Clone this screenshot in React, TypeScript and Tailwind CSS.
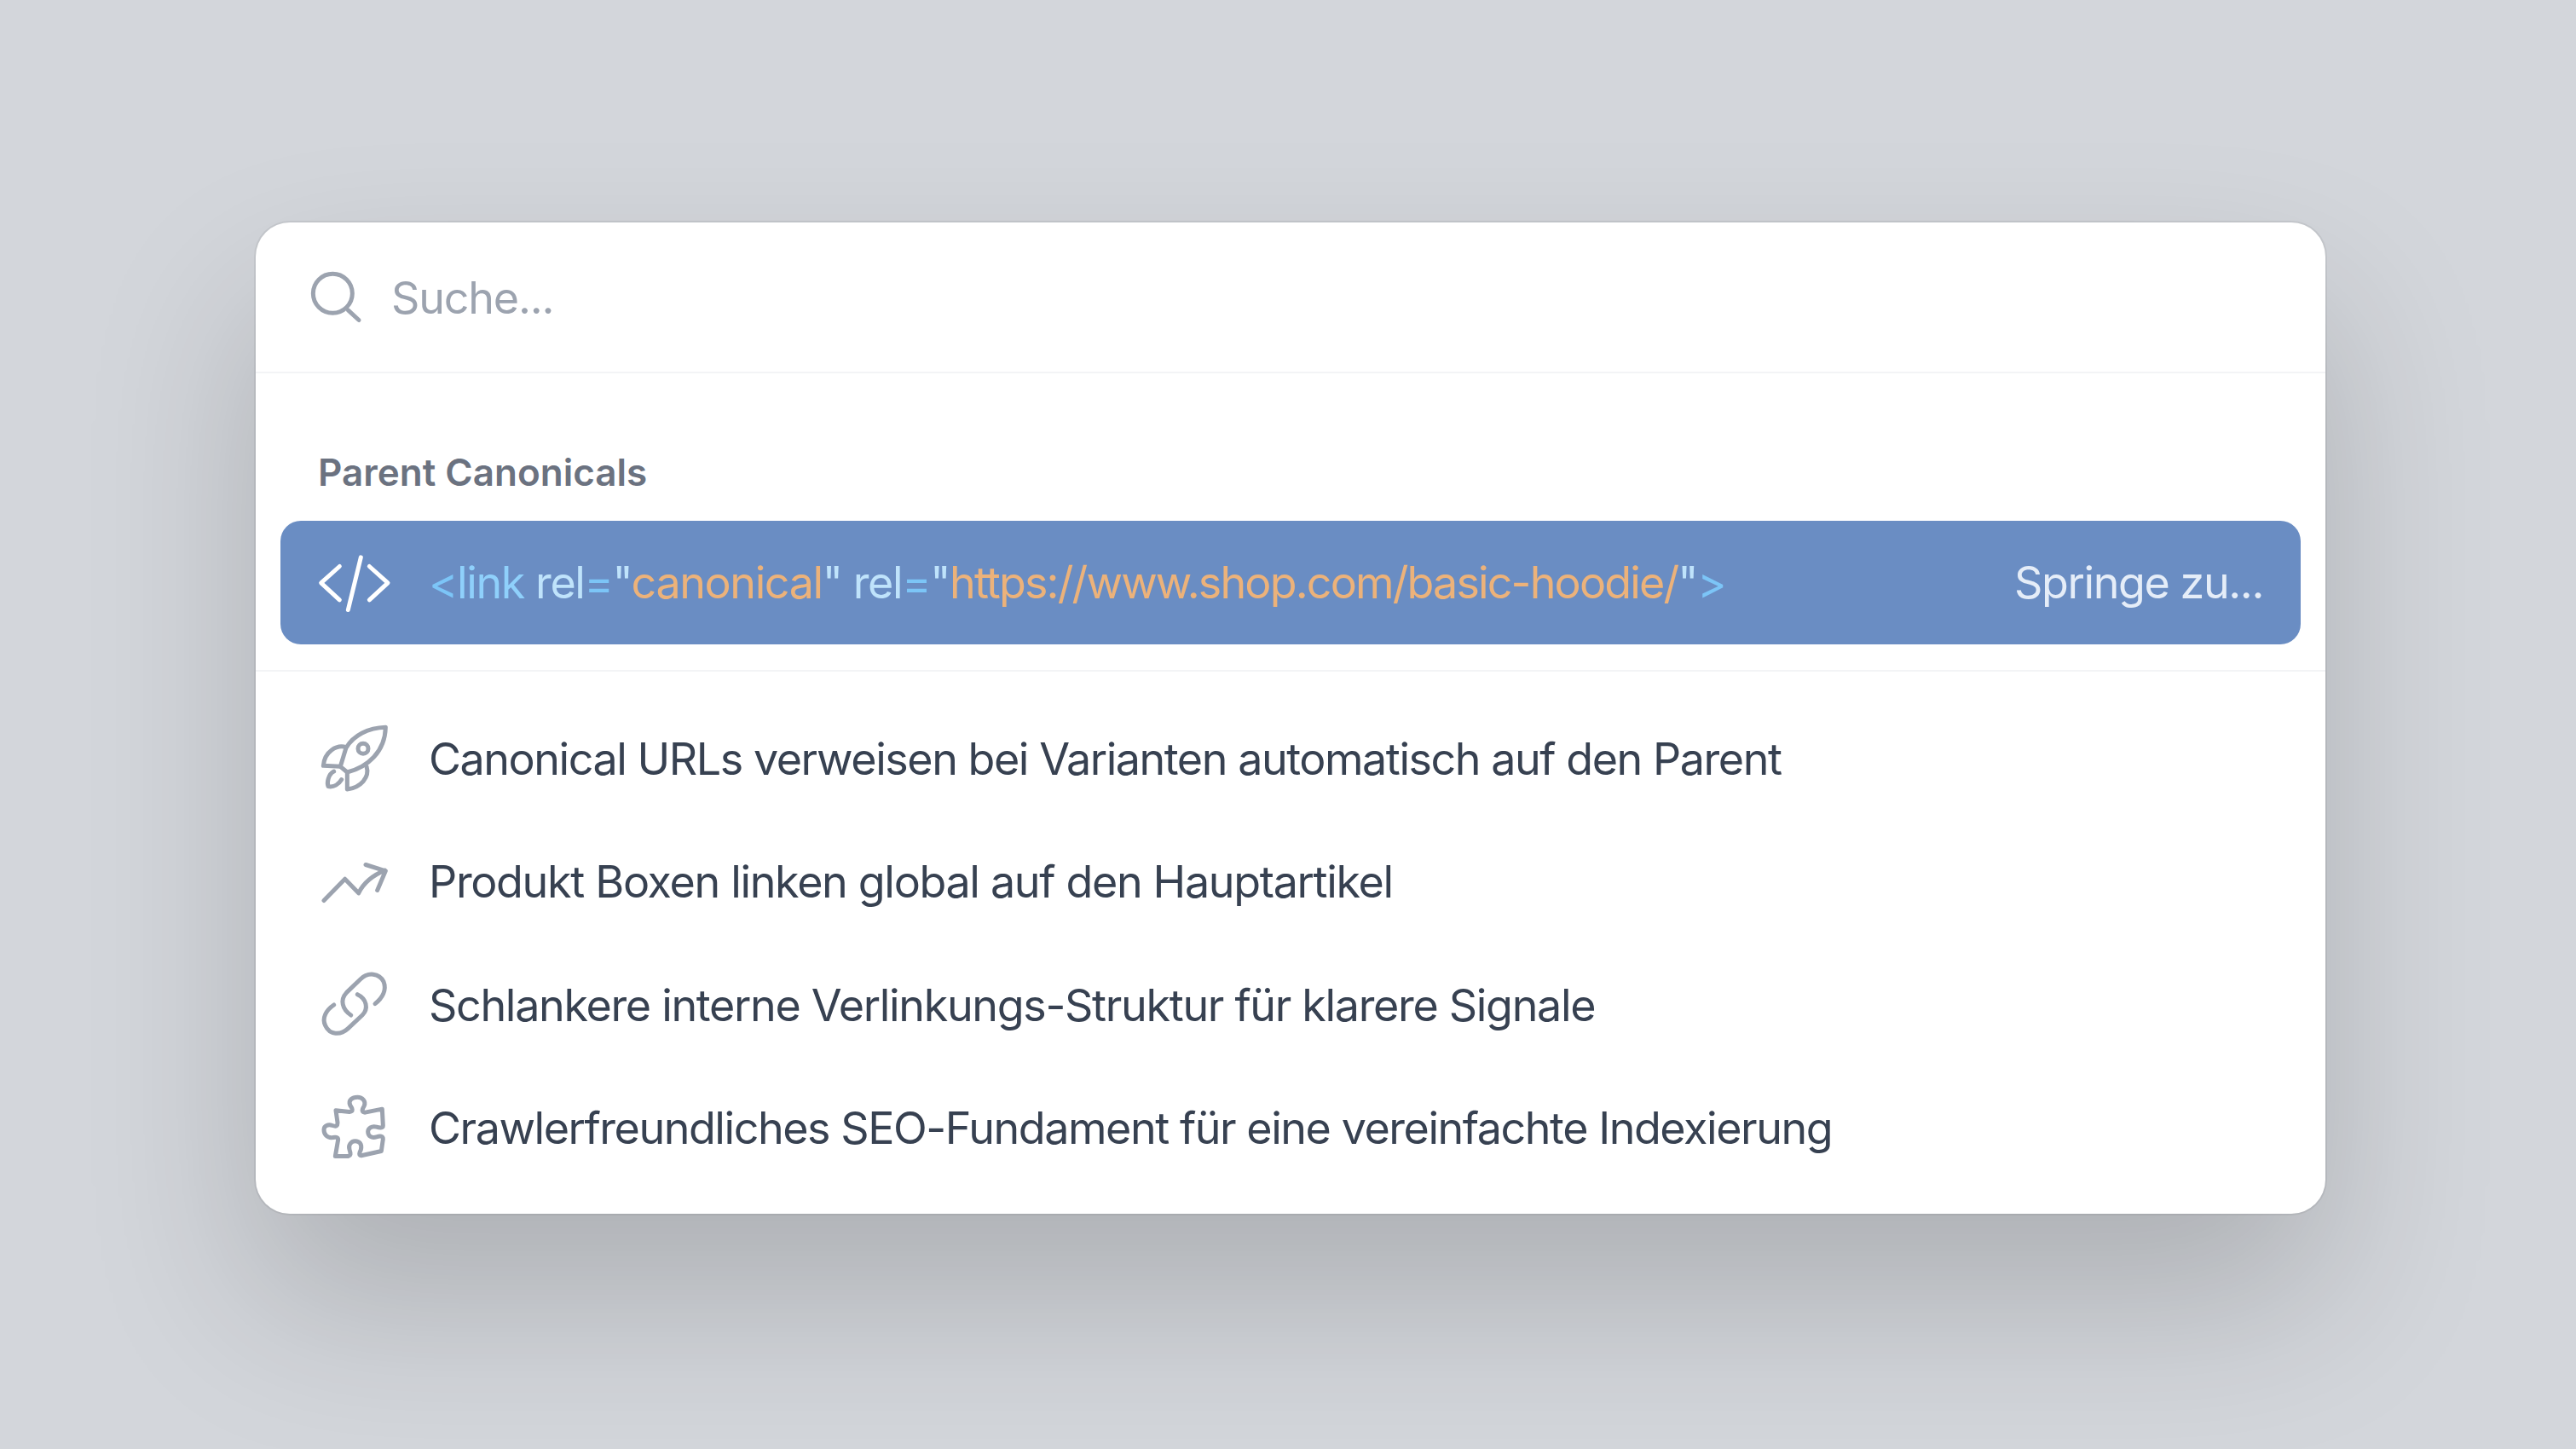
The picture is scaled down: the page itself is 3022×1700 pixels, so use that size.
import type { ReactNode } from "react";

function Icon({ y, children, className }: { y: number; children: ReactNode; className: string }) {
  return (
    <svg
      viewBox={`0 ${y} 330 330`}
      fill="none"
      stroke="currentColor"
      strokeWidth={15}
      strokeLinecap="round"
      strokeLinejoin="round"
      className={`-my-[10px] size-[110px] shrink-0 ${className}`}
    >
      {children}
    </svg>
  );
}

const rows: { y: number; icon: ReactNode; text: string; tracking: string }[] = [
  {
    y: -18,
    tracking: "tracking-[-1.45px]",
    text: "Canonical URLs verweisen bei Varianten automatisch auf den Parent",
    icon: (
      <>
        <path d="M277 40C215 42 165 68 138 112L118 178L142 198C215 180 275 125 277 40Z" />
        <circle cx="198" cy="115" r="18" />
        <path d="M138 110C105 100 62 125 58 175L118 178" />
        <path d="M210 178C222 215 190 252 142 258L142 198" />
        <path d="M95 195C75 205 70 235 75 248C95 252 112 240 122 224" />
      </>
    ),
  },
  {
    y: -4.5,
    tracking: "tracking-[-1.33px]",
    text: "Produkt Boxen linken global auf den Hauptartikel",
    icon: <path d="M60 228L134 152L182 202C200 165 230 140 275 122M207 102L277 124L248 192" />,
  },
  {
    y: -6,
    tracking: "tracking-[-1.32px]",
    text: "Schlankere interne Verlinkungs-Struktur für klarere Signale",
    icon: (
      <>
        <path d="M155 198C125 178 115 145 140 118L188 72C215 45 255 50 270 80C282 110 265 138 240 158" />
        <path d="M178 125C210 140 218 175 195 198L145 245C118 270 80 268 65 235C52 208 68 180 95 162" />
      </>
    ),
  },
  {
    y: -7.5,
    tracking: "tracking-[-1.45px]",
    text: "Crawlerfreundliches SEO-Fundament für eine vereinfachte Indexierung",
    icon: (
      <path d="M102 97L150 102C165 100 160 90 152 78C145 60 160 50 178 50C196 50 208 65 202 80C195 92 190 102 205 104L265 92L268 150C268 160 255 158 245 155C228 150 215 160 215 172C215 188 228 195 245 190C258 186 268 186 268 198L262 240L195 255C180 258 185 245 190 235C195 215 185 205 170 205C155 205 145 220 150 235C155 250 155 255 145 258L100 258L110 200C110 190 100 190 92 192C70 195 60 180 60 165C60 150 75 145 90 150C105 155 108 150 108 140Z" />
    ),
  },
];

export default function App() {
  return (
    <div className="h-[1700px] bg-[#d3d6db] pt-[261px] font-['Inter',sans-serif]">
      <div className="ml-[300px] flex h-[1163px] w-[2428px] flex-col rounded-[40px] bg-white shadow-[0_100px_200px_rgba(0,0,0,0.18),0_0_0_2px_rgba(0,0,0,0.06)]">
        <div className="flex h-[177px] items-center gap-[4px] border-b-2 border-[#f3f4f6] pl-[45px]">
          <Icon y={-4.5} className="text-[#9ca3af]">
            <circle cx="136" cy="146" r="69" />
            <path d="M190 205L228 240" />
          </Icon>
          <span className="pt-[2px] text-[52px] tracking-[-1.2px] text-[#9ca3af]">Suche...</span>
        </div>
        <div className="border-b-2 border-[#f3f4f6] px-[29px] pb-[30px]">
          <div className="px-[44px] pt-[86px] pb-[27px] text-[44px] leading-[60px] font-semibold text-[#6b7280]">
            Parent Canonicals
          </div>
          <div className="flex h-[145px] items-center gap-[33px] rounded-[24px] bg-[#6a8dc3] pr-[44px] pl-[31px]">
            <Icon y={-4.5} className="text-white">
              <path d="M115 102L50 160L115 220M220 102L285 160L220 220M190 70L145 255" />
            </Icon>
            <span className="flex-1 text-[52px] tracking-[-1.4px] text-[#bfe3fb]">
              <span className="text-[#7cc5f7]">&lt;</span>
              <span className="text-[#8fd0fb]">link</span> rel<span className="text-[#7cc5f7]">=</span>"
              <span className="text-[#ecb27a]">canonical</span>" rel<span className="text-[#7cc5f7]">=</span>"
              <span className="tracking-[-1.85px] text-[#ecb27a]">https://www.shop.com/basic-hoodie/</span>"
              <span className="text-[#7cc5f7]">&gt;</span>
            </span>
            <span className="text-[52px] tracking-[-1.4px] text-[#e5edf8]">Springe zu...</span>
          </div>
        </div>
        <div className="flex flex-col pt-[29px] pl-[60px]">
          {rows.map((r) => (
            <div key={r.text} className="flex h-[144.5px] items-center gap-[33px]">
              <Icon y={r.y} className="text-[#9ca3af]">
                {r.icon}
              </Icon>
              <span className={`pt-[3px] text-[52px] text-[#374151] ${r.tracking}`}>{r.text}</span>
            </div>
          ))}
        </div>
      </div>
    </div>
  );
}
